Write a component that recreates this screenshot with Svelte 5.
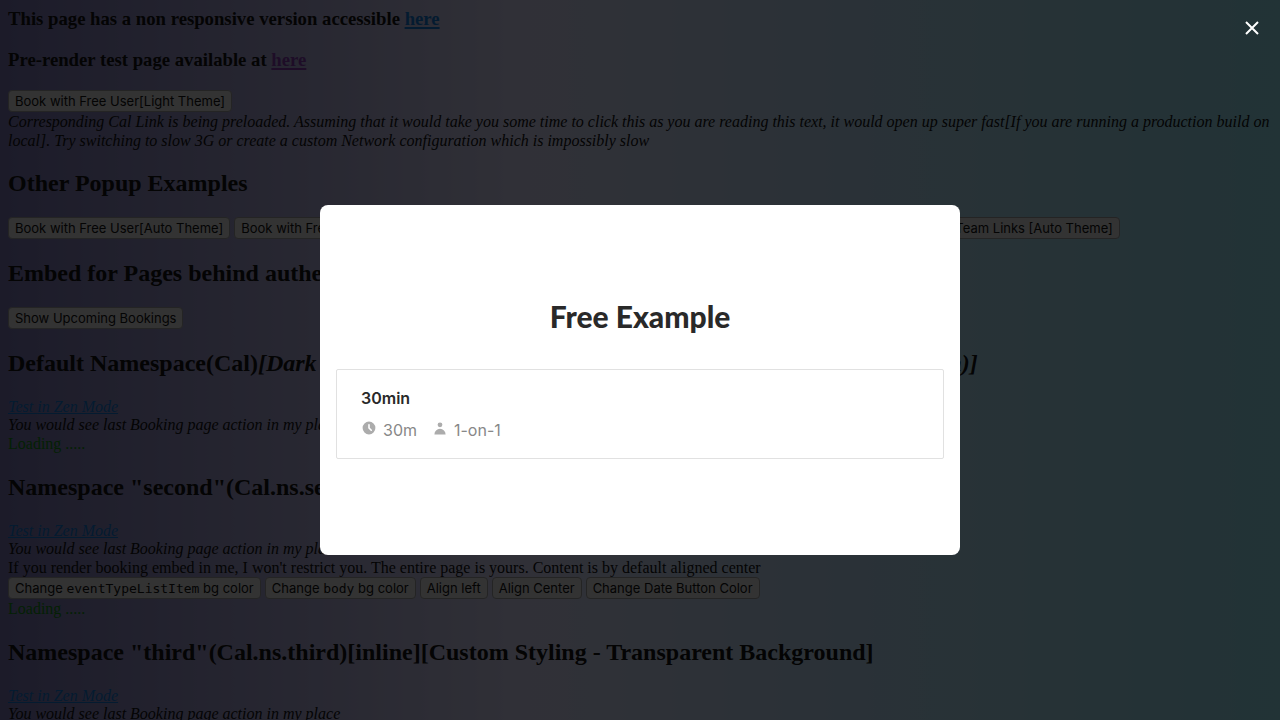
<script>
  const popups = [
    'Book with Free User[Auto Theme]',
    'Book with Free User[Dark Theme]',
    'Book with Test User[Light Theme]',
    'Book with Test User[Dark Theme]',
    'Book Team Links [Auto Theme]',
  ];
  let open = $state(true);
</script>

<main class="page">
  <h3>This page has a non responsive version accessible <a href="#nonresponsive">here</a></h3>
  <h3>Pre-render test page available at <a class="visited" href="#prerender">here</a></h3>
  <div class="buttons"><button type="button">Book with Free User[Light Theme]</button></div>
  <p class="line"><i>Corresponding Cal Link is being preloaded. Assuming that it would take you some time to click this as you are reading this text, it would open up super fast[If you are running a production build on local]. Try switching to slow 3G or create a custom Network configuration which is impossibly slow</i></p>

  <h2>Other Popup Examples</h2>
  <div class="buttons">
    {#each popups as label}<button type="button">{label}</button>{/each}
  </div>

  <h2>Embed for Pages behind authentication</h2>
  <div class="buttons"><button type="button">Show Upcoming Bookings</button></div>

  <h2>Default Namespace(Cal)<i>[Dark Theme][inline][Guest(janedoe@example.com,test@example.com)]</i></h2>
  <p class="line"><i><a href="#default">Test in Zen Mode</a></i></p>
  <p class="line last"><i>You would see last Booking page action in my place</i></p>
  <p class="line status"><span class="loading">Loading .....</span></p>

  <h2>Namespace "second"(Cal.ns.second)[Custom Styling][inline]</h2>
  <p class="line"><i><a href="#second">Test in Zen Mode</a></i></p>
  <p class="line last"><i>You would see last Booking page action in my place</i></p>
  <p class="line">If you render booking embed in me, I won't restrict you. The entire page is yours. Content is by default aligned center</p>
  <div class="buttons">
    <button type="button">Change <code>eventTypeListItem</code> bg color</button>
    <button type="button">Change <code>body</code> bg color</button>
    <button type="button">Align left</button>
    <button type="button">Align Center</button>
    <button type="button">Change Date Button Color</button>
  </div>
  <p class="line status"><span class="loading">Loading .....</span></p>

  <h2>Namespace "third"(Cal.ns.third)[inline][Custom Styling - Transparent Background]</h2>
  <p class="line"><i><a href="#third">Test in Zen Mode</a></i></p>
  <p class="line last"><i>You would see last Booking page action in my place</i></p>
</main>

{#if open}
  <div class="overlay">
    <button class="close" type="button" aria-label="Close" onclick={() => (open = false)}>
      <svg viewBox="0 0 24 24" width="24" height="24" aria-hidden="true">
        <path d="M6 6l12 12M18 6L6 18" fill="none" stroke="currentColor" stroke-width="2" />
      </svg>
    </button>
    <div class="modal" role="dialog" aria-modal="true" aria-labelledby="profile-name">
      <h1 id="profile-name">Free Example</h1>
      <a class="event" href="#30min">
        <span class="name">30min</span>
        <span class="meta">
          <span class="item">
            <svg viewBox="0 0 20 20" width="16" height="16" aria-hidden="true">
              <path fill="currentColor" fill-rule="evenodd" d="M10 18a8 8 0 100-16 8 8 0 000 16zm1-12a1 1 0 10-2 0v4a1 1 0 00.293.707l2.828 2.829a1 1 0 101.415-1.415L11 9.586V6z" />
            </svg>
            30m
          </span>
          <span class="item">
            <svg viewBox="0 0 20 20" width="16" height="16" aria-hidden="true">
              <path fill="currentColor" d="M10 9a3 3 0 100-6 3 3 0 000 6zm-7 9a7 7 0 1114 0H3z" />
            </svg>
            1-on-1
          </span>
        </span>
      </a>
    </div>
  </div>
{/if}

<style>
  :global(body) {
    overflow: hidden;
    background: linear-gradient(90deg, rgb(120, 116, 186) 0%, rgb(221, 221, 255) 41%, rgb(148, 232, 249) 100%);
  }
  .page {
    padding: 8px;
    font: 16px/19px "Liberation Serif", "Times New Roman", serif;
    color: #000;
  }
  h3 {
    margin: 0 0 19px;
    line-height: 22px;
  }
  h2 {
    margin: 20px 0;
    font-size: 24px;
    line-height: 27px;
    white-space: nowrap;
  }
  .buttons + h2,
  .status + h2 {
    margin-top: 21px;
  }
  .line {
    margin: 0;
  }
  .line.last {
    line-height: 18px;
  }
  .page a {
    color: #0074dc;
  }
  .page a.visited {
    color: #8030b0;
  }
  h3 a {
    text-decoration-thickness: 2px;
    text-underline-offset: 2px;
  }
  .loading {
    color: #008a00;
  }
  .buttons {
    display: flex;
    gap: 4px;
  }
  .buttons button {
    flex: none;
    height: 22px;
    padding: 0 6px;
    border: 1px solid #a0a0a0;
    border-radius: 4px;
    background: #e8e8e8;
    color: #000;
    font: 13px/18px Inter, sans-serif;
    white-space: pre;
  }
  code {
    font-family: "DejaVu Sans Mono", monospace;
    font-size: 13px;
  }
  .overlay {
    position: fixed;
    inset: 0;
    display: grid;
    place-items: center;
    padding-top: 40px;
    background: rgba(5, 5, 5, 0.8);
  }
  .close {
    position: absolute;
    top: 16px;
    right: 16px;
    display: flex;
    padding: 0;
    border: 0;
    background: none;
    color: #fff;
    cursor: pointer;
  }
  .modal {
    width: 50%;
    box-sizing: border-box;
    padding: 93px 16px 96px;
    border-radius: 8px;
    background: #fff;
    font-family: Inter, sans-serif;
  }
  h1 {
    margin: 0 0 35px;
    color: #292929;
    font-family: Lato, sans-serif;
    font-size: 30px;
    line-height: 36px;
    font-weight: 900;
    text-align: center;
  }
  .event {
    display: flex;
    flex-direction: column;
    gap: 8px;
    padding: 16px 24px;
    border: 1px solid #e1e1e1;
    border-radius: 2px;
    color: #292929;
    font-size: 16px;
    line-height: 24px;
    text-decoration: none;
  }
  .name {
    font-weight: 600;
  }
  .meta {
    display: flex;
    gap: 15px;
    color: #888;
  }
  .item {
    display: flex;
    gap: 6px;
  }
  .item svg {
    margin-top: 2px;
    color: #acacac;
  }
</style>
